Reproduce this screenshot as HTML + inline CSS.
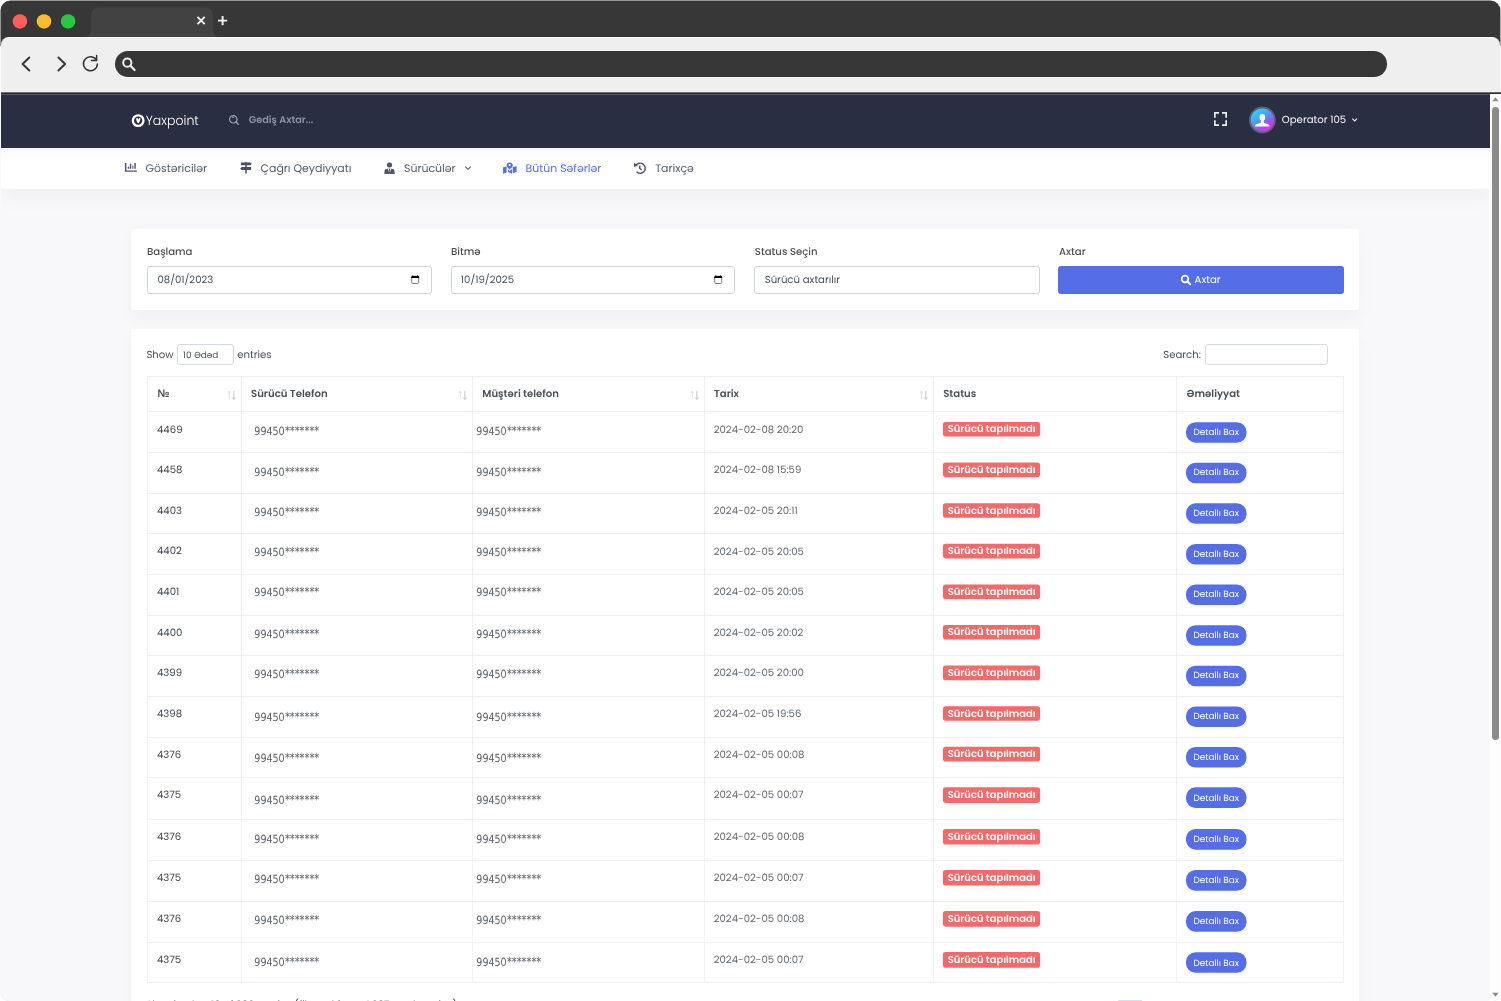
<!DOCTYPE html>
<html lang="az"><head><meta charset="utf-8"><title>Yaxpoint</title>
<style>
*{box-sizing:border-box;margin:0;padding:0}
html,body{width:1501px;height:1001px;overflow:hidden;background:#fff}
body{position:relative;font-family:Poppins,"Liberation Sans",sans-serif;color:#495057;font-size:10px}
.abs{position:absolute}
#win{position:absolute;left:1px;top:1px;width:1499.5px;height:999.5px;background:#f8f8fb;border-radius:10px 10px 9px 9px;overflow:hidden;box-shadow:0 0 1px rgba(0,0,0,.25)}
#page{position:absolute;left:1px;top:94px;width:1500px;height:907px;background:#f8f8fb;overflow:hidden;border-radius:0 0 9px 9px}
#page>*{position:absolute}
/* everything inside #page is positioned in absolute screen coords via offset wrapper */
#off{left:-1px;top:-94px;width:1501px;height:1001px;will-change:transform}
#off>*{position:absolute}
#toolbar{position:absolute;left:1px;top:37px;width:1499px;height:55.5px;background:#efefef;border-radius:8px 8px 0 0;border-top:1px solid #fafafa}
#url{position:absolute;left:114.5px;top:51px;width:1272.5px;height:26px;border-radius:13px;background:#373737}
#navbar{left:1px;top:94px;width:1489px;height:54px;background:#2a2e42;border-top:1px solid #52566b}
#menu{left:1px;top:148px;width:1489px;height:40.8px;background:linear-gradient(#f5f5f8 0,#fbfbfd 4px,#fff 11px);box-shadow:0 9.4px 18.7px rgba(18,38,63,.035)}
.card{background:#fff;border-radius:3px;box-shadow:0 9.4px 18.7px rgba(18,38,63,.03)}
.inp{position:absolute;top:266px;height:27.5px;border:1px solid #ced4da;border-radius:3px;background:#fff;font-size:9.6px;line-height:25.5px;padding-left:9.5px;color:#495057;letter-spacing:.35px}
.vl{position:absolute;top:376px;width:1px;height:607px;background:linear-gradient(#eceff5 0,#eceff5 442px,#f2f4f9 442px)}
.hl{position:absolute;left:147px;width:1197px;height:1px;background:#eceff5}

</style></head><body>
<div id="win"></div>
<svg class="abs" style="left:0;top:0" width="1501" height="46" viewBox="0 0 1501 46">
  <path d="M.5 46 V10.600 A10 10 0 0 1 10.500 .600 H1490.400 A10 10 0 0 1 1500.400 10.600 V46 Z" fill="#373737"/>
  <circle cx="19.900" cy="21.400" r="7.250" fill="#ff5f57"/>
  <circle cx="44" cy="21.400" r="7.250" fill="#febc2e"/>
  <circle cx="68.100" cy="21.400" r="7.250" fill="#28c840"/>
</svg>
<!-- tab -->
<svg class="abs" style="left:80px;top:7px" width="150" height="30" viewBox="0 0 150 30">
  <path d="M4 30 C9 30 11 27 11 22 L11 9 C11 3 14 0.5 20 0.5 L124 0.5 C130 0.5 133 3 133 9 L133 22 C133 27 135 30 140 30 Z" fill="#424242"/>
  <path d="M117.500 9.900 l7.200 7.200 m0 -7.200 l-7.200 7.200" stroke="#f2f2f2" stroke-width="1.900" fill="none"/>
  <path d="M138 13.600 h9.200 m-4.600 -4.600 v9.200" stroke="#f2f2f2" stroke-width="1.950" fill="none"/>
</svg>
<div id="toolbar"></div>
<svg class="abs" style="left:10px;top:40px" width="100" height="50" viewBox="0 0 100 50">
  <g fill="none" stroke="#333" stroke-width="1.9" stroke-linecap="round" stroke-linejoin="round">
    <path d="M19.3 17.5 L12.6 24 L19.3 30.5"/>
    <path d="M48.4 17.5 L55.1 24 L48.4 30.5"/>
  </g>
  <g fill="none" stroke="#333" stroke-width="1.5" stroke-linecap="round" stroke-linejoin="round">
    <path d="M87.4 23.9 A7 7 0 1 1 86.5 20.300"/>
    <path d="M86.6 15.400 V20.400 H81.500" />
  </g>
</svg>
<div id="url"></div>
<svg class="abs" style="left:120px;top:55px" width="20" height="18" viewBox="0 0 20 18">
  <circle cx="7.3" cy="7.7" r="4.1" fill="none" stroke="#efefef" stroke-width="2"/>
  <path d="M10.4 10.8 L14.6 15" stroke="#efefef" stroke-width="2.2" stroke-linecap="round"/>
</svg>
<!-- separator line under toolbar -->
<div class="abs" style="left:1px;top:92.4px;width:1499.5px;height:1.8px;background:linear-gradient(#9a9a9a,#2c2c2c 60%)"></div>

<div id="page"><div id="off">
  <div id="navbar"></div>
  <!-- logo -->
  <svg style="left:130px;top:113px" width="16" height="16" viewBox="0 0 16 16">
    <circle cx="8.15" cy="7.65" r="5.3" fill="none" stroke="#fff" stroke-width="2.3"/>
    <path d="M6.1 5.3 L7.500 5 L8.250 6.800 L9 5 L10.400 5.300 C10.400 7.600 9.600 9.300 8.250 10.500 C6.900 9.300 6.100 7.600 6.100 5.300 Z" fill="#fff"/>
  </svg>
  <svg style="left:227px;top:113px" width="14" height="14" viewBox="0 0 14 14">
    <circle cx="6.3" cy="6.3" r="3.7" fill="none" stroke="#a2a6b4" stroke-width="1.2"/>
    <path d="M9 9 L11.2 11.2" stroke="#a2a6b4" stroke-width="1.3" stroke-linecap="round"/>
    <path d="M5.2 4.4 L7.2 4.4" stroke="#a2a6b4" stroke-width="1"/>
  </svg>
  <!-- fullscreen -->
  <svg style="left:1212px;top:110px" width="18" height="18" viewBox="0 0 18 18">
    <path d="M2.85 7.7 V2.85 H7 M10 2.85 H14.15 V7.7 M14.15 10.3 V15.15 H10 M7 15.15 H2.85 V10.3" fill="none" stroke="#eceef2" stroke-width="1.7"/>
  </svg>
  <!-- avatar -->
  <svg style="left:1247px;top:105px" width="30" height="30" viewBox="0 0 30 30">
    <defs><linearGradient id="ag" x1="0.12" y1="0.05" x2="0.8" y2="1">
      <stop offset="0" stop-color="#19e6fb"/><stop offset=".3" stop-color="#3db4f6"/><stop offset=".55" stop-color="#6f7af0"/><stop offset=".78" stop-color="#c03df0"/><stop offset="1" stop-color="#f52bee"/></linearGradient>
      <clipPath id="ac"><circle cx="15.3" cy="15" r="11.6"/></clipPath></defs>
    <circle cx="15.400" cy="15" r="12.500" fill="url(#ag)" stroke="#5b6074" stroke-width="1.800"/>
    <g clip-path="url(#ac)" fill="#fff">
      <ellipse cx="15.3" cy="12.4" rx="2.8" ry="3.3"/>
      <path d="M13.9 14.500 h2.800 v2.600 c0 .9 .7 1.200 1.800 1.400 c2.300 .4 3.900 .8 3.900 2.300 v.8 h-14.200 v-.8 c0 -1.500 1.600 -1.900 3.900 -2.300 c1.100 -.2 1.800 -.5 1.800 -1.400 z"/>
    </g>
  </svg>
  <svg style="left:1350px;top:115px" width="10" height="10" viewBox="0 0 10 10"><path d="M2.3 3.6 L4.7 5.9 L7.100 3.6" fill="none" stroke="#e6e7ec" stroke-width="1.2"/></svg>

  <div id="menu"></div>
  <!-- menu icons -->
  <svg style="left:124px;top:161px" width="14" height="13" viewBox="0 0 14 13">
    <path d="M1.65 2 V10.100 H13" fill="none" stroke="#4f556b" stroke-width="1.450"/>
    <path d="M4.500 7.800 V5.800 M6.550 7.800 V2.700 M11.050 7.800 V2" stroke="#4f556b" stroke-width="1.450"/>
    <path d="M8.800 7.800 V4.800" stroke="#7d8296" stroke-width="1.450"/>
  </svg>
  <svg style="left:239px;top:160px" width="14" height="15" viewBox="0 0 14 15">
    <path d="M6.200 2 h1.600 v11.600 h-1.600 z" fill="#4f556b"/>
    <path d="M1.900 2.500 H11.300 L12.900 3.850 L11.300 5.200 H1.900 Z M12.100 7 H2.700 L1.100 8.450 L2.700 9.900 H12.100 Z" fill="#4a5068"/>
  </svg>
  <svg style="left:383px;top:160.5px" width="13" height="14" viewBox="0 0 13 14">
    <rect x="3.900" y="1.500" width="5.200" height="5" rx="2.300" fill="#4f556b"/>
    <path d="M1.400 13 V10.800 C1.400 8.900 2.600 7.800 4.300 7.700 H8.700 C10.400 7.800 11.600 8.900 11.600 10.800 V13 Z" fill="#4f556b"/>
    <path d="M4.700 7.700 H8.300 L6.500 12.900 Z" fill="#fff"/>
    <path d="M6 7.700 H7 L7.300 11.300 L6.500 12.500 L5.700 11.300 Z" fill="#4f556b"/>
  </svg>
  <svg style="left:463px;top:163px" width="10" height="10" viewBox="0 0 10 10"><path d="M2.300 3.700 L5 6.300 L7.700 3.700" fill="none" stroke="#545a6d" stroke-width="1.150"/></svg>
  <svg style="left:502px;top:160.5px" width="16" height="14" viewBox="0 0 16 14">
    <path d="M1.100 6.300 L4.600 5.600 V11.300 L1.100 13 Z M6 8.600 L7.700 9.900 L9.400 8.600 H10.100 V12.800 L6 11.100 Z M10.800 6.100 L14.600 5.300 V10.800 L10.800 12.300 Z" fill="#556ee6"/>
    <path d="M7.700 1.400 C9.600 1.400 10.800 2.700 10.800 4.300 C10.800 5.900 9 7.200 7.700 8.400 C6.400 7.200 4.600 5.900 4.600 4.300 C4.600 2.700 5.800 1.400 7.700 1.400 Z" fill="#556ee6"/>
    <circle cx="7.700" cy="4.100" r="1.100" fill="#fff"/>
  </svg>
  <svg style="left:633px;top:160.500px" width="15" height="14" viewBox="0 0 15 14">
    <path d="M2.680 4.700 A5.100 5.100 0 1 1 3.500 10.850" fill="none" stroke="#4f556b" stroke-width="1.450"/>
    <path d="M1 1.500 V5.800 L4.900 5.100 Z" fill="#4f556b"/>
    <path d="M6.750 4.400 V7.500 L8.700 8.900" fill="none" stroke="#4f556b" stroke-width="1.450"/>
  </svg>

  <!-- filter card -->
  <div class="card" style="left:131.300px;top:229px;width:1227.700px;height:81px"></div>
  <div class="inp" style="left:147px;width:284.500px"></div>
  <div class="inp" style="left:451px;width:284px"></div>
  <div class="inp" style="left:754px;width:286px"></div>
  <svg style="left:410px;top:274px" width="12" height="12" viewBox="0 0 12 12"><rect x="1.700" y="2.300" width="7" height="7.200" rx="1.300" fill="none" stroke="#7d7d7d" stroke-width="1"/><path d="M1.200 3.900 V3.300 Q1.200 2 2.500 2 H7.900 Q9.200 2 9.200 3.300 V3.900 Z" fill="#000"/><path d="M2.300 1.200 h.9 v1 h-.9 z M7.200 1.200 h.9 v1 h-.9 z" fill="#111"/></svg>
  <svg style="left:713.2px;top:274px" width="12" height="12" viewBox="0 0 12 12"><rect x="1.700" y="2.300" width="7" height="7.200" rx="1.300" fill="none" stroke="#7d7d7d" stroke-width="1"/><path d="M1.200 3.900 V3.300 Q1.200 2 2.500 2 H7.900 Q9.200 2 9.200 3.300 V3.900 Z" fill="#000"/><path d="M2.300 1.200 h.9 v1 h-.9 z M7.200 1.200 h.9 v1 h-.9 z" fill="#111"/></svg>
  <div style="left:1058px;top:266px;width:285.500px;height:27.500px;background:#556ee6;border-radius:3px"></div>
  <svg style="left:1179px;top:273px" width="14" height="14" viewBox="0 0 14 14"><circle cx="6" cy="6" r="3.300" fill="none" stroke="#fff" stroke-width="1.700"/><path d="M8.500 8.500 L11.300 11.300" stroke="#fff" stroke-width="1.900" stroke-linecap="round"/></svg>

  <!-- table card -->
  <div class="card" style="left:131.300px;top:328.500px;width:1227.700px;height:700px"></div>
  <div style="left:176.700px;top:344px;width:57px;height:20.700px;border:1px solid #d5dae1;border-radius:3px;background:#fff"></div>
  <div style="left:1205.300px;top:344.300px;width:122.500px;height:20.500px;border:1px solid #d5dae1;border-radius:3px;background:#fff"></div>

  <!-- table header -->
  <div class="hl" style="top:376px"></div>
  <div class="vl" style="left:147px"></div>
  <div class="vl" style="left:241px"></div>
  <div class="vl" style="left:472.300px"></div>
  <div class="vl" style="left:704px"></div>
  <div class="vl" style="left:933px"></div>
  <div class="vl" style="left:1176.300px"></div>
  <div class="vl" style="left:1343px"></div>
  <svg style="left:227.0px;top:389.6px" width="9.9" height="10.8" viewBox="0 0 11 12"><path d="M2.6 10.300 V1.500 M.8 3.400 L2.600 1.300 L4.400 3.400" fill="none" stroke="#d9dce1" stroke-width=".9"/><path d="M7.600 1.300 V10.200 M5.800 8.300 L7.600 10.400 L9.400 8.300" fill="none" stroke="#b4b8bf" stroke-width=".9"/></svg>
  <svg style="left:458.0px;top:389.6px" width="9.9" height="10.8" viewBox="0 0 11 12"><path d="M2.6 10.300 V1.500 M.8 3.400 L2.600 1.300 L4.400 3.400" fill="none" stroke="#d9dce1" stroke-width=".9"/><path d="M7.600 1.300 V10.200 M5.800 8.300 L7.600 10.400 L9.400 8.300" fill="none" stroke="#b4b8bf" stroke-width=".9"/></svg>
  <svg style="left:689.8px;top:389.6px" width="9.9" height="10.8" viewBox="0 0 11 12"><path d="M2.6 10.300 V1.500 M.8 3.400 L2.600 1.300 L4.400 3.400" fill="none" stroke="#d9dce1" stroke-width=".9"/><path d="M7.600 1.300 V10.200 M5.800 8.300 L7.600 10.400 L9.400 8.300" fill="none" stroke="#b4b8bf" stroke-width=".9"/></svg>
  <svg style="left:919.4px;top:389.6px" width="9.9" height="10.8" viewBox="0 0 11 12"><path d="M2.6 10.300 V1.500 M.8 3.400 L2.600 1.300 L4.400 3.400" fill="none" stroke="#d9dce1" stroke-width=".9"/><path d="M7.600 1.300 V10.200 M5.800 8.300 L7.600 10.400 L9.400 8.300" fill="none" stroke="#b4b8bf" stroke-width=".9"/></svg>
<div class="hl" style="top:411px"></div>
<div class="hl" style="top:452px"></div>
<div class="hl" style="top:493px"></div>
<div class="hl" style="top:533px"></div>
<div class="hl" style="top:574px"></div>
<div class="hl" style="top:615px"></div>
<div class="hl" style="top:655px"></div>
<div class="hl" style="top:696px"></div>
<div class="hl" style="top:737px"></div>
<div class="hl" style="top:777px"></div>
<div class="hl" style="top:819px"></div>
<div class="hl" style="top:860px"></div>
<div class="hl" style="top:901px"></div>
<div class="hl" style="top:942px"></div>
<div class="hl" style="top:982px"></div>
<svg style="left:0;top:0" width="1501" height="1001" viewBox="0 0 1501 1001" font-family='Poppins,"Liberation Sans",sans-serif' text-rendering="geometricPrecision">
<rect x="942.9" y="421.95" width="97.2" height="14.6" rx="2.8" fill="#f46a6a"/><rect x="1186" y="422.15" width="60.5" height="20.5" rx="9.6" fill="#556ee6"/>
<rect x="942.9" y="462.56" width="97.2" height="14.6" rx="2.8" fill="#f46a6a"/><rect x="1186" y="462.76" width="60.5" height="20.5" rx="9.6" fill="#556ee6"/>
<rect x="942.9" y="503.17" width="97.2" height="14.6" rx="2.8" fill="#f46a6a"/><rect x="1186" y="503.37" width="60.5" height="20.5" rx="9.6" fill="#556ee6"/>
<rect x="942.9" y="543.78" width="97.2" height="14.6" rx="2.8" fill="#f46a6a"/><rect x="1186" y="543.98" width="60.5" height="20.5" rx="9.6" fill="#556ee6"/>
<rect x="942.9" y="584.39" width="97.2" height="14.6" rx="2.8" fill="#f46a6a"/><rect x="1186" y="584.59" width="60.5" height="20.5" rx="9.6" fill="#556ee6"/>
<rect x="942.9" y="625.00" width="97.2" height="14.6" rx="2.8" fill="#f46a6a"/><rect x="1186" y="625.20" width="60.5" height="20.5" rx="9.6" fill="#556ee6"/>
<rect x="942.9" y="665.61" width="97.2" height="14.6" rx="2.8" fill="#f46a6a"/><rect x="1186" y="665.81" width="60.5" height="20.5" rx="9.6" fill="#556ee6"/>
<rect x="942.9" y="706.22" width="97.2" height="14.6" rx="2.8" fill="#f46a6a"/><rect x="1186" y="706.42" width="60.5" height="20.5" rx="9.6" fill="#556ee6"/>
<rect x="942.9" y="746.83" width="97.2" height="14.6" rx="2.8" fill="#f46a6a"/><rect x="1186" y="747.03" width="60.5" height="20.5" rx="9.6" fill="#556ee6"/>
<rect x="942.9" y="787.29" width="97.2" height="15.6" rx="2.8" fill="#f46a6a"/><rect x="1186" y="787.34" width="60.5" height="20.7" rx="9.6" fill="#556ee6"/>
<rect x="942.9" y="828.90" width="97.2" height="15.6" rx="2.8" fill="#f46a6a"/><rect x="1186" y="828.95" width="60.5" height="20.7" rx="9.6" fill="#556ee6"/>
<rect x="942.9" y="869.97" width="97.2" height="15.6" rx="2.8" fill="#f46a6a"/><rect x="1186" y="870.02" width="60.5" height="20.7" rx="9.6" fill="#556ee6"/>
<rect x="942.9" y="911.04" width="97.2" height="15.6" rx="2.8" fill="#f46a6a"/><rect x="1186" y="911.09" width="60.5" height="20.7" rx="9.6" fill="#556ee6"/>
<rect x="942.9" y="952.11" width="97.2" height="15.6" rx="2.8" fill="#f46a6a"/><rect x="1186" y="952.16" width="60.5" height="20.7" rx="9.6" fill="#556ee6"/>
<rect x="1118" y="1000.3" width="24.3" height="12" rx="1" fill="#556ee6" opacity=".3"/>
<text x="145.80" y="124.91" font-size="13.3" fill="#fff" textLength="53.00" lengthAdjust="spacingAndGlyphs" font-weight="300">Yaxpoint</text>
<text x="248.70" y="122.98" font-size="9.75" fill="#8d91a4" textLength="64.66" lengthAdjust="spacingAndGlyphs" font-weight="600">Gediş Axtar...</text>
<text x="1281.80" y="122.72" font-size="10.15" fill="#f4f5f8" textLength="64.31" lengthAdjust="spacingAndGlyphs">Operator 105</text>
<text x="145.60" y="171.79" font-size="10.93" fill="#545a6d" textLength="61.55" lengthAdjust="spacingAndGlyphs">Göstəricilər</text>
<text x="260.60" y="171.79" font-size="10.93" fill="#545a6d" textLength="90.83" lengthAdjust="spacingAndGlyphs">Çağrı Qeydiyyatı</text>
<text x="404.00" y="171.79" font-size="10.93" fill="#545a6d" textLength="51.62" lengthAdjust="spacingAndGlyphs">Sürücülər</text>
<text x="525.60" y="171.79" font-size="10.93" fill="#556ee6" textLength="75.72" lengthAdjust="spacingAndGlyphs">Bütün Səfərlər</text>
<text x="655.20" y="171.79" font-size="10.93" fill="#545a6d" textLength="38.69" lengthAdjust="spacingAndGlyphs">Tarixçə</text>
<text x="146.90" y="254.97" font-size="10.15" fill="#495057" textLength="45.58" lengthAdjust="spacingAndGlyphs" font-weight="500">Başlama</text>
<text x="450.90" y="254.97" font-size="10.15" fill="#495057" textLength="29.59" lengthAdjust="spacingAndGlyphs" font-weight="500">Bitmə</text>
<text x="754.80" y="254.97" font-size="10.15" fill="#495057" textLength="62.81" lengthAdjust="spacingAndGlyphs" font-weight="500">Status Seçin</text>
<text x="1058.90" y="254.97" font-size="10.15" fill="#495057" textLength="26.64" lengthAdjust="spacingAndGlyphs" font-weight="500">Axtar</text>
<text x="157.40" y="283.12" font-size="10.15" fill="#495057" textLength="55.95" lengthAdjust="spacingAndGlyphs">08/01/2023</text>
<text x="460.80" y="283.12" font-size="10.15" fill="#495057" textLength="53.22" lengthAdjust="spacingAndGlyphs">10/19/2025</text>
<text x="764.70" y="283.12" font-size="10.15" fill="#495057" textLength="75.27" lengthAdjust="spacingAndGlyphs">Sürücü axtarılır</text>
<text x="1194.60" y="283.32" font-size="10.15" fill="#fff" textLength="25.98" lengthAdjust="spacingAndGlyphs">Axtar</text>
<text x="146.40" y="357.82" font-size="10.15" fill="#495057" textLength="27.22" lengthAdjust="spacingAndGlyphs">Show</text>
<text x="183.10" y="357.58" font-size="8.88" fill="#495057" textLength="35.27" lengthAdjust="spacingAndGlyphs">10 Ədəd</text>
<text x="237.20" y="357.82" font-size="10.15" fill="#495057" textLength="34.28" lengthAdjust="spacingAndGlyphs">entries</text>
<text x="1163.20" y="357.82" font-size="10.15" fill="#495057" textLength="37.62" lengthAdjust="spacingAndGlyphs">Search:</text>
<text x="157.40" y="397.31" font-size="11" fill="#495057" textLength="11.90" lengthAdjust="spacingAndGlyphs" font-weight="bold" font-family='"Liberation Sans",sans-serif'>№</text>
<text x="251.00" y="397.22" font-size="10.15" fill="#495057" textLength="76.64" lengthAdjust="spacingAndGlyphs" font-weight="600">Sürücü Telefon</text>
<text x="482.30" y="397.22" font-size="10.15" fill="#495057" textLength="76.69" lengthAdjust="spacingAndGlyphs" font-weight="600">Müştəri telefon</text>
<text x="714.00" y="397.22" font-size="10.15" fill="#495057" textLength="25.09" lengthAdjust="spacingAndGlyphs" font-weight="600">Tarix</text>
<text x="943.20" y="397.22" font-size="10.15" fill="#495057" textLength="33.11" lengthAdjust="spacingAndGlyphs" font-weight="600">Status</text>
<text x="1186.60" y="397.22" font-size="10.15" fill="#495057" textLength="53.45" lengthAdjust="spacingAndGlyphs" font-weight="600">Əməliyyat</text>
<text x="157.00" y="432.65" font-size="10.15" fill="#41464d" textLength="25.55" lengthAdjust="spacingAndGlyphs">4469</text>
<text y="434.87" fill="#5b6067" font-family='"DejaVu Sans Condensed","DejaVu Sans",sans-serif'><tspan x="254.30" font-size="11.3" textLength="30.4" lengthAdjust="spacingAndGlyphs">99450</tspan><tspan x="284.90" font-size="12.4" textLength="34.3" lengthAdjust="spacingAndGlyphs">*******</tspan></text>
<text y="434.87" fill="#5b6067" font-family='"DejaVu Sans Condensed","DejaVu Sans",sans-serif'><tspan x="476.30" font-size="11.3" textLength="30.4" lengthAdjust="spacingAndGlyphs">99450</tspan><tspan x="506.90" font-size="12.4" textLength="34.3" lengthAdjust="spacingAndGlyphs">*******</tspan></text>
<text x="713.70" y="432.75" font-size="10.15" fill="#636970" textLength="89.69" lengthAdjust="spacingAndGlyphs">2024-02-08 20:20</text>
<text x="947.70" y="432.31" font-size="9.9" fill="#fff" textLength="87.90" lengthAdjust="spacingAndGlyphs" font-weight="600">Sürücü tapılmadı</text>
<text x="1193.40" y="434.76" font-size="8.88" fill="#fff" textLength="45.62" lengthAdjust="spacingAndGlyphs">Detallı Bax</text>
<text x="157.00" y="473.26" font-size="10.15" fill="#41464d" textLength="25.50" lengthAdjust="spacingAndGlyphs">4458</text>
<text y="475.68" fill="#5b6067" font-family='"DejaVu Sans Condensed","DejaVu Sans",sans-serif'><tspan x="254.30" font-size="11.3" textLength="30.4" lengthAdjust="spacingAndGlyphs">99450</tspan><tspan x="284.90" font-size="12.4" textLength="34.3" lengthAdjust="spacingAndGlyphs">*******</tspan></text>
<text y="475.68" fill="#5b6067" font-family='"DejaVu Sans Condensed","DejaVu Sans",sans-serif'><tspan x="476.30" font-size="11.3" textLength="30.4" lengthAdjust="spacingAndGlyphs">99450</tspan><tspan x="506.90" font-size="12.4" textLength="34.3" lengthAdjust="spacingAndGlyphs">*******</tspan></text>
<text x="713.70" y="473.36" font-size="10.15" fill="#636970" textLength="87.66" lengthAdjust="spacingAndGlyphs">2024-02-08 15:59</text>
<text x="947.70" y="472.92" font-size="9.9" fill="#fff" textLength="87.90" lengthAdjust="spacingAndGlyphs" font-weight="600">Sürücü tapılmadı</text>
<text x="1193.40" y="475.37" font-size="8.88" fill="#fff" textLength="45.62" lengthAdjust="spacingAndGlyphs">Detallı Bax</text>
<text x="157.00" y="513.87" font-size="10.15" fill="#41464d" textLength="25.06" lengthAdjust="spacingAndGlyphs">4403</text>
<text y="516.39" fill="#5b6067" font-family='"DejaVu Sans Condensed","DejaVu Sans",sans-serif'><tspan x="254.30" font-size="11.3" textLength="30.4" lengthAdjust="spacingAndGlyphs">99450</tspan><tspan x="284.90" font-size="12.4" textLength="34.3" lengthAdjust="spacingAndGlyphs">*******</tspan></text>
<text y="516.39" fill="#5b6067" font-family='"DejaVu Sans Condensed","DejaVu Sans",sans-serif'><tspan x="476.30" font-size="11.3" textLength="30.4" lengthAdjust="spacingAndGlyphs">99450</tspan><tspan x="506.90" font-size="12.4" textLength="34.3" lengthAdjust="spacingAndGlyphs">*******</tspan></text>
<text x="713.70" y="513.97" font-size="10.15" fill="#636970" textLength="83.95" lengthAdjust="spacingAndGlyphs">2024-02-05 20:11</text>
<text x="947.70" y="513.53" font-size="9.9" fill="#fff" textLength="87.90" lengthAdjust="spacingAndGlyphs" font-weight="600">Sürücü tapılmadı</text>
<text x="1193.40" y="515.98" font-size="8.88" fill="#fff" textLength="45.62" lengthAdjust="spacingAndGlyphs">Detallı Bax</text>
<text x="157.00" y="554.48" font-size="10.15" fill="#41464d" textLength="24.92" lengthAdjust="spacingAndGlyphs">4402</text>
<text y="556.00" fill="#5b6067" font-family='"DejaVu Sans Condensed","DejaVu Sans",sans-serif'><tspan x="254.30" font-size="11.3" textLength="30.4" lengthAdjust="spacingAndGlyphs">99450</tspan><tspan x="284.90" font-size="12.4" textLength="34.3" lengthAdjust="spacingAndGlyphs">*******</tspan></text>
<text y="556.00" fill="#5b6067" font-family='"DejaVu Sans Condensed","DejaVu Sans",sans-serif'><tspan x="476.30" font-size="11.3" textLength="30.4" lengthAdjust="spacingAndGlyphs">99450</tspan><tspan x="506.90" font-size="12.4" textLength="34.3" lengthAdjust="spacingAndGlyphs">*******</tspan></text>
<text x="713.70" y="554.58" font-size="10.15" fill="#636970" textLength="90.19" lengthAdjust="spacingAndGlyphs">2024-02-05 20:05</text>
<text x="947.70" y="554.14" font-size="9.9" fill="#fff" textLength="87.90" lengthAdjust="spacingAndGlyphs" font-weight="600">Sürücü tapılmadı</text>
<text x="1193.40" y="556.59" font-size="8.88" fill="#fff" textLength="45.62" lengthAdjust="spacingAndGlyphs">Detallı Bax</text>
<text x="157.00" y="595.09" font-size="10.15" fill="#41464d" textLength="22.34" lengthAdjust="spacingAndGlyphs">4401</text>
<text y="596.41" fill="#5b6067" font-family='"DejaVu Sans Condensed","DejaVu Sans",sans-serif'><tspan x="254.30" font-size="11.3" textLength="30.4" lengthAdjust="spacingAndGlyphs">99450</tspan><tspan x="284.90" font-size="12.4" textLength="34.3" lengthAdjust="spacingAndGlyphs">*******</tspan></text>
<text y="596.41" fill="#5b6067" font-family='"DejaVu Sans Condensed","DejaVu Sans",sans-serif'><tspan x="476.30" font-size="11.3" textLength="30.4" lengthAdjust="spacingAndGlyphs">99450</tspan><tspan x="506.90" font-size="12.4" textLength="34.3" lengthAdjust="spacingAndGlyphs">*******</tspan></text>
<text x="713.70" y="595.19" font-size="10.15" fill="#636970" textLength="90.19" lengthAdjust="spacingAndGlyphs">2024-02-05 20:05</text>
<text x="947.70" y="594.75" font-size="9.9" fill="#fff" textLength="87.90" lengthAdjust="spacingAndGlyphs" font-weight="600">Sürücü tapılmadı</text>
<text x="1193.40" y="597.20" font-size="8.88" fill="#fff" textLength="45.62" lengthAdjust="spacingAndGlyphs">Detallı Bax</text>
<text x="157.00" y="635.70" font-size="10.15" fill="#41464d" textLength="25.47" lengthAdjust="spacingAndGlyphs">4400</text>
<text y="637.62" fill="#5b6067" font-family='"DejaVu Sans Condensed","DejaVu Sans",sans-serif'><tspan x="254.30" font-size="11.3" textLength="30.4" lengthAdjust="spacingAndGlyphs">99450</tspan><tspan x="284.90" font-size="12.4" textLength="34.3" lengthAdjust="spacingAndGlyphs">*******</tspan></text>
<text y="637.62" fill="#5b6067" font-family='"DejaVu Sans Condensed","DejaVu Sans",sans-serif'><tspan x="476.30" font-size="11.3" textLength="30.4" lengthAdjust="spacingAndGlyphs">99450</tspan><tspan x="506.90" font-size="12.4" textLength="34.3" lengthAdjust="spacingAndGlyphs">*******</tspan></text>
<text x="713.70" y="635.80" font-size="10.15" fill="#636970" textLength="89.66" lengthAdjust="spacingAndGlyphs">2024-02-05 20:02</text>
<text x="947.70" y="635.36" font-size="9.9" fill="#fff" textLength="87.90" lengthAdjust="spacingAndGlyphs" font-weight="600">Sürücü tapılmadı</text>
<text x="1193.40" y="637.81" font-size="8.88" fill="#fff" textLength="45.62" lengthAdjust="spacingAndGlyphs">Detallı Bax</text>
<text x="157.00" y="676.31" font-size="10.15" fill="#41464d" textLength="25.09" lengthAdjust="spacingAndGlyphs">4399</text>
<text y="678.43" fill="#5b6067" font-family='"DejaVu Sans Condensed","DejaVu Sans",sans-serif'><tspan x="254.30" font-size="11.3" textLength="30.4" lengthAdjust="spacingAndGlyphs">99450</tspan><tspan x="284.90" font-size="12.4" textLength="34.3" lengthAdjust="spacingAndGlyphs">*******</tspan></text>
<text y="678.43" fill="#5b6067" font-family='"DejaVu Sans Condensed","DejaVu Sans",sans-serif'><tspan x="476.30" font-size="11.3" textLength="30.4" lengthAdjust="spacingAndGlyphs">99450</tspan><tspan x="506.90" font-size="12.4" textLength="34.3" lengthAdjust="spacingAndGlyphs">*******</tspan></text>
<text x="713.70" y="676.41" font-size="10.15" fill="#636970" textLength="90.19" lengthAdjust="spacingAndGlyphs">2024-02-05 20:00</text>
<text x="947.70" y="675.97" font-size="9.9" fill="#fff" textLength="87.90" lengthAdjust="spacingAndGlyphs" font-weight="600">Sürücü tapılmadı</text>
<text x="1193.40" y="678.42" font-size="8.88" fill="#fff" textLength="45.62" lengthAdjust="spacingAndGlyphs">Detallı Bax</text>
<text x="157.00" y="716.92" font-size="10.15" fill="#41464d" textLength="25.11" lengthAdjust="spacingAndGlyphs">4398</text>
<text y="720.64" fill="#5b6067" font-family='"DejaVu Sans Condensed","DejaVu Sans",sans-serif'><tspan x="254.30" font-size="11.3" textLength="30.4" lengthAdjust="spacingAndGlyphs">99450</tspan><tspan x="284.90" font-size="12.4" textLength="34.3" lengthAdjust="spacingAndGlyphs">*******</tspan></text>
<text y="720.64" fill="#5b6067" font-family='"DejaVu Sans Condensed","DejaVu Sans",sans-serif'><tspan x="476.30" font-size="11.3" textLength="30.4" lengthAdjust="spacingAndGlyphs">99450</tspan><tspan x="506.90" font-size="12.4" textLength="34.3" lengthAdjust="spacingAndGlyphs">*******</tspan></text>
<text x="713.70" y="717.02" font-size="10.15" fill="#636970" textLength="87.70" lengthAdjust="spacingAndGlyphs">2024-02-05 19:56</text>
<text x="947.70" y="716.58" font-size="9.9" fill="#fff" textLength="87.90" lengthAdjust="spacingAndGlyphs" font-weight="600">Sürücü tapılmadı</text>
<text x="1193.40" y="719.03" font-size="8.88" fill="#fff" textLength="45.62" lengthAdjust="spacingAndGlyphs">Detallı Bax</text>
<text x="157.00" y="757.53" font-size="10.15" fill="#41464d" textLength="24.30" lengthAdjust="spacingAndGlyphs">4376</text>
<text y="762.35" fill="#5b6067" font-family='"DejaVu Sans Condensed","DejaVu Sans",sans-serif'><tspan x="254.30" font-size="11.3" textLength="30.4" lengthAdjust="spacingAndGlyphs">99450</tspan><tspan x="284.90" font-size="12.4" textLength="34.3" lengthAdjust="spacingAndGlyphs">*******</tspan></text>
<text y="762.35" fill="#5b6067" font-family='"DejaVu Sans Condensed","DejaVu Sans",sans-serif'><tspan x="476.30" font-size="11.3" textLength="30.4" lengthAdjust="spacingAndGlyphs">99450</tspan><tspan x="506.90" font-size="12.4" textLength="34.3" lengthAdjust="spacingAndGlyphs">*******</tspan></text>
<text x="713.70" y="757.63" font-size="10.15" fill="#636970" textLength="90.75" lengthAdjust="spacingAndGlyphs">2024-02-05 00:08</text>
<text x="947.70" y="757.19" font-size="9.9" fill="#fff" textLength="87.90" lengthAdjust="spacingAndGlyphs" font-weight="600">Sürücü tapılmadı</text>
<text x="1193.40" y="759.64" font-size="8.88" fill="#fff" textLength="45.62" lengthAdjust="spacingAndGlyphs">Detallı Bax</text>
<text x="157.00" y="798.14" font-size="10.15" fill="#41464d" textLength="24.23" lengthAdjust="spacingAndGlyphs">4375</text>
<text y="804.06" fill="#5b6067" font-family='"DejaVu Sans Condensed","DejaVu Sans",sans-serif'><tspan x="254.30" font-size="11.3" textLength="30.4" lengthAdjust="spacingAndGlyphs">99450</tspan><tspan x="284.90" font-size="12.4" textLength="34.3" lengthAdjust="spacingAndGlyphs">*******</tspan></text>
<text y="804.06" fill="#5b6067" font-family='"DejaVu Sans Condensed","DejaVu Sans",sans-serif'><tspan x="476.30" font-size="11.3" textLength="30.4" lengthAdjust="spacingAndGlyphs">99450</tspan><tspan x="506.90" font-size="12.4" textLength="34.3" lengthAdjust="spacingAndGlyphs">*******</tspan></text>
<text x="713.70" y="798.24" font-size="10.15" fill="#636970" textLength="89.89" lengthAdjust="spacingAndGlyphs">2024-02-05 00:07</text>
<text x="947.70" y="798.15" font-size="9.9" fill="#fff" textLength="87.90" lengthAdjust="spacingAndGlyphs" font-weight="600">Sürücü tapılmadı</text>
<text x="1193.40" y="800.70" font-size="8.88" fill="#fff" textLength="45.62" lengthAdjust="spacingAndGlyphs">Detallı Bax</text>
<text x="157.00" y="839.75" font-size="10.15" fill="#41464d" textLength="24.30" lengthAdjust="spacingAndGlyphs">4376</text>
<text y="842.57" fill="#5b6067" font-family='"DejaVu Sans Condensed","DejaVu Sans",sans-serif'><tspan x="254.30" font-size="11.3" textLength="30.4" lengthAdjust="spacingAndGlyphs">99450</tspan><tspan x="284.90" font-size="12.4" textLength="34.3" lengthAdjust="spacingAndGlyphs">*******</tspan></text>
<text y="842.57" fill="#5b6067" font-family='"DejaVu Sans Condensed","DejaVu Sans",sans-serif'><tspan x="476.30" font-size="11.3" textLength="30.4" lengthAdjust="spacingAndGlyphs">99450</tspan><tspan x="506.90" font-size="12.4" textLength="34.3" lengthAdjust="spacingAndGlyphs">*******</tspan></text>
<text x="713.70" y="839.85" font-size="10.15" fill="#636970" textLength="90.75" lengthAdjust="spacingAndGlyphs">2024-02-05 00:08</text>
<text x="947.70" y="839.76" font-size="9.9" fill="#fff" textLength="87.90" lengthAdjust="spacingAndGlyphs" font-weight="600">Sürücü tapılmadı</text>
<text x="1193.40" y="842.31" font-size="8.88" fill="#fff" textLength="45.62" lengthAdjust="spacingAndGlyphs">Detallı Bax</text>
<text x="157.00" y="880.82" font-size="10.15" fill="#41464d" textLength="24.23" lengthAdjust="spacingAndGlyphs">4375</text>
<text y="882.54" fill="#5b6067" font-family='"DejaVu Sans Condensed","DejaVu Sans",sans-serif'><tspan x="254.30" font-size="11.3" textLength="30.4" lengthAdjust="spacingAndGlyphs">99450</tspan><tspan x="284.90" font-size="12.4" textLength="34.3" lengthAdjust="spacingAndGlyphs">*******</tspan></text>
<text y="882.54" fill="#5b6067" font-family='"DejaVu Sans Condensed","DejaVu Sans",sans-serif'><tspan x="476.30" font-size="11.3" textLength="30.4" lengthAdjust="spacingAndGlyphs">99450</tspan><tspan x="506.90" font-size="12.4" textLength="34.3" lengthAdjust="spacingAndGlyphs">*******</tspan></text>
<text x="713.70" y="880.92" font-size="10.15" fill="#636970" textLength="89.89" lengthAdjust="spacingAndGlyphs">2024-02-05 00:07</text>
<text x="947.70" y="880.83" font-size="9.9" fill="#fff" textLength="87.90" lengthAdjust="spacingAndGlyphs" font-weight="600">Sürücü tapılmadı</text>
<text x="1193.40" y="883.38" font-size="8.88" fill="#fff" textLength="45.62" lengthAdjust="spacingAndGlyphs">Detallı Bax</text>
<text x="157.00" y="921.89" font-size="10.15" fill="#41464d" textLength="24.30" lengthAdjust="spacingAndGlyphs">4376</text>
<text y="923.81" fill="#5b6067" font-family='"DejaVu Sans Condensed","DejaVu Sans",sans-serif'><tspan x="254.30" font-size="11.3" textLength="30.4" lengthAdjust="spacingAndGlyphs">99450</tspan><tspan x="284.90" font-size="12.4" textLength="34.3" lengthAdjust="spacingAndGlyphs">*******</tspan></text>
<text y="923.81" fill="#5b6067" font-family='"DejaVu Sans Condensed","DejaVu Sans",sans-serif'><tspan x="476.30" font-size="11.3" textLength="30.4" lengthAdjust="spacingAndGlyphs">99450</tspan><tspan x="506.90" font-size="12.4" textLength="34.3" lengthAdjust="spacingAndGlyphs">*******</tspan></text>
<text x="713.70" y="921.99" font-size="10.15" fill="#636970" textLength="90.75" lengthAdjust="spacingAndGlyphs">2024-02-05 00:08</text>
<text x="947.70" y="921.90" font-size="9.9" fill="#fff" textLength="87.90" lengthAdjust="spacingAndGlyphs" font-weight="600">Sürücü tapılmadı</text>
<text x="1193.40" y="924.45" font-size="8.88" fill="#fff" textLength="45.62" lengthAdjust="spacingAndGlyphs">Detallı Bax</text>
<text x="157.00" y="962.96" font-size="10.15" fill="#41464d" textLength="24.23" lengthAdjust="spacingAndGlyphs">4375</text>
<text y="965.58" fill="#5b6067" font-family='"DejaVu Sans Condensed","DejaVu Sans",sans-serif'><tspan x="254.30" font-size="11.3" textLength="30.4" lengthAdjust="spacingAndGlyphs">99450</tspan><tspan x="284.90" font-size="12.4" textLength="34.3" lengthAdjust="spacingAndGlyphs">*******</tspan></text>
<text y="965.58" fill="#5b6067" font-family='"DejaVu Sans Condensed","DejaVu Sans",sans-serif'><tspan x="476.30" font-size="11.3" textLength="30.4" lengthAdjust="spacingAndGlyphs">99450</tspan><tspan x="506.90" font-size="12.4" textLength="34.3" lengthAdjust="spacingAndGlyphs">*******</tspan></text>
<text x="713.70" y="963.06" font-size="10.15" fill="#636970" textLength="89.89" lengthAdjust="spacingAndGlyphs">2024-02-05 00:07</text>
<text x="947.70" y="962.97" font-size="9.9" fill="#fff" textLength="87.90" lengthAdjust="spacingAndGlyphs" font-weight="600">Sürücü tapılmadı</text>
<text x="1193.40" y="965.52" font-size="8.88" fill="#fff" textLength="45.62" lengthAdjust="spacingAndGlyphs">Detallı Bax</text>
<text x="146.40" y="1007.72" font-size="10.15" fill="#495057" textLength="310.73" lengthAdjust="spacingAndGlyphs">Showing 1 to 10 of 386 entries (filtered from 4,387 total entries)</text>
</svg>

  <!-- scrollbar -->
  <div style="left:1490px;top:94px;width:11px;height:907px;background:#fdfdfd"></div>
  <svg style="left:1490px;top:94px" width="11" height="14" viewBox="0 0 11 14"><path d="M2.300 7.300 L5.500 3.300 L8.700 7.300 Z" fill="#8b8b8b"/></svg>
  <div style="left:1492.300px;top:107px;width:6.700px;height:633px;border-radius:3.400px;background:#8b8b8b"></div>
  <svg style="left:1490px;top:987px" width="11" height="14" viewBox="0 0 11 14"><path d="M2.300 5.700 L5.500 9.700 L8.700 5.700 Z" fill="#8b8b8b"/></svg>
</div></div>
</body></html>
